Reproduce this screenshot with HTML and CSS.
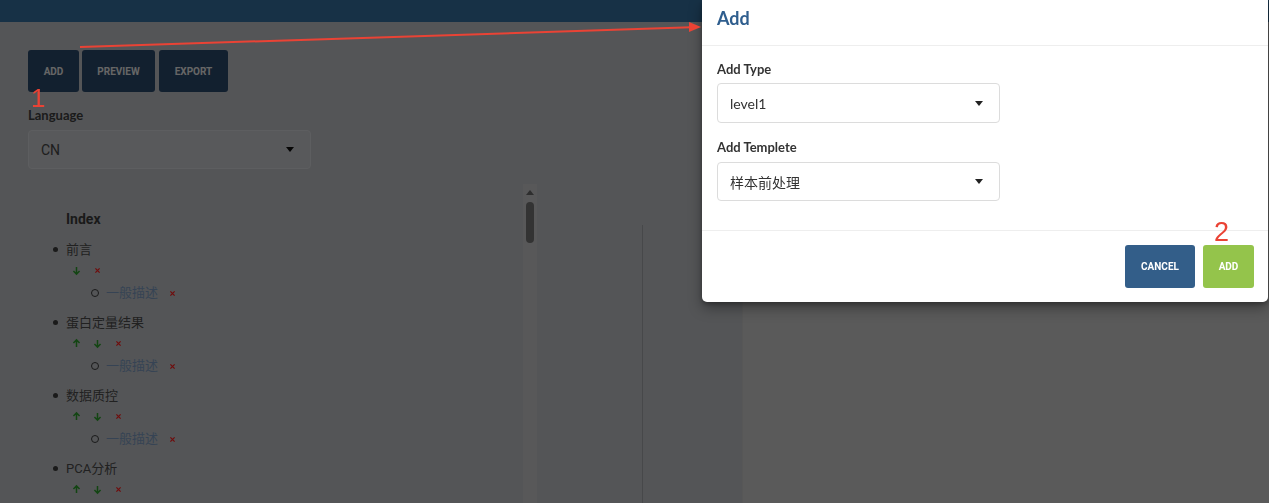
FILE: index.html
```html
<!DOCTYPE html>
<html lang="zh">
<head>
<meta charset="utf-8">
<title>Report Editor</title>
<link rel="stylesheet" href="styles.css">
</head>
<body>
<div class="page">
  <header class="topbar"></header>
  <main class="main">
    <section class="left">
      <div class="toolbar">
        <button class="tbtn">ADD</button>
        <button class="tbtn">PREVIEW</button>
        <button class="tbtn">EXPORT</button>
      </div>
      <label class="field-label">Language</label>
      <div class="select lang-select"><span>CN</span><span class="caret"></span></div>
      <div class="index-panel">
        <div class="index-content">
          <h4 class="index-title">Index</h4>
          <ul class="toc">
            <li>
              <div class="item">前言</div>
              <div class="ctrls"><span class="ic down"><svg viewBox="0 0 10 10"><path d="M5 1v8M1.6 5.6L5 9l3.4-3.4"/></svg></span><span class="ic del"><svg viewBox="0 0 10 10"><path d="M2 2l6 6M8 2L2 8"/></svg></span></div>
              <ul class="sub"><li><a class="link">一般描述</a><span class="ic del sm"><svg viewBox="0 0 10 10"><path d="M2 2l6 6M8 2L2 8"/></svg></span></li></ul>
            </li>
            <li>
              <div class="item">蛋白定量结果</div>
              <div class="ctrls"><span class="ic up"><svg viewBox="0 0 10 10"><path d="M5 9V1M1.6 4.4L5 1l3.4 3.4"/></svg></span><span class="ic down"><svg viewBox="0 0 10 10"><path d="M5 1v8M1.6 5.6L5 9l3.4-3.4"/></svg></span><span class="ic del"><svg viewBox="0 0 10 10"><path d="M2 2l6 6M8 2L2 8"/></svg></span></div>
              <ul class="sub"><li><a class="link">一般描述</a><span class="ic del sm"><svg viewBox="0 0 10 10"><path d="M2 2l6 6M8 2L2 8"/></svg></span></li></ul>
            </li>
            <li>
              <div class="item">数据质控</div>
              <div class="ctrls"><span class="ic up"><svg viewBox="0 0 10 10"><path d="M5 9V1M1.6 4.4L5 1l3.4 3.4"/></svg></span><span class="ic down"><svg viewBox="0 0 10 10"><path d="M5 1v8M1.6 5.6L5 9l3.4-3.4"/></svg></span><span class="ic del"><svg viewBox="0 0 10 10"><path d="M2 2l6 6M8 2L2 8"/></svg></span></div>
              <ul class="sub"><li><a class="link">一般描述</a><span class="ic del sm"><svg viewBox="0 0 10 10"><path d="M2 2l6 6M8 2L2 8"/></svg></span></li></ul>
            </li>
            <li>
              <div class="item">PCA分析</div>
              <div class="ctrls"><span class="ic up"><svg viewBox="0 0 10 10"><path d="M5 9V1M1.6 4.4L5 1l3.4 3.4"/></svg></span><span class="ic down"><svg viewBox="0 0 10 10"><path d="M5 1v8M1.6 5.6L5 9l3.4-3.4"/></svg></span><span class="ic del"><svg viewBox="0 0 10 10"><path d="M2 2l6 6M8 2L2 8"/></svg></span></div>
            </li>
          </ul>
        </div>
        <div class="scrollbar">
          <span class="sb-arrow"></span>
          <span class="sb-thumb"></span>
        </div>
      </div>
    </section>
    <section class="mid"></section>
    <section class="right"></section>
  </main>
</div>

<div class="overlay"></div>

<div class="modal">
  <div class="modal-head"><h3 class="modal-title">Add</h3></div>
  <div class="modal-body">
    <label class="m-label">Add Type</label>
    <div class="select m-select"><span>level1</span><span class="caret"></span></div>
    <label class="m-label second">Add Templete</label>
    <div class="select m-select second"><span>样本前处理</span><span class="caret"></span></div>
  </div>
  <div class="modal-foot">
    <button class="mbtn cancel">CANCEL</button>
    <button class="mbtn add">ADD</button>
  </div>
</div>

<svg class="annot" viewBox="0 0 1269 503" width="1269" height="503">
  <line x1="80" y1="47" x2="691" y2="27.3" stroke="#ea4335" stroke-width="2"/>
  <polygon points="689,22 701,27 689,32" fill="#ea4335"/>
</svg>
<span class="mark mark1">1</span>
<span class="mark mark2">2</span>
</body>
</html>
```

FILE: styles.css
```css
* { box-sizing: border-box; }

html, body {
  margin: 0;
  padding: 0;
  width: 1269px;
  height: 503px;
  overflow: hidden;
}

body {
  font-family: Roboto, "Noto Sans CJK SC", sans-serif;
  background: #bbbdc1;
  color: #4a4a4a;
}

.page {
  display: flex;
  flex-direction: column;
  height: 503px;
}

.topbar {
  height: 22px;
  flex: 0 0 22px;
  background: #336d9c;
}

.main {
  flex: 1;
  display: flex;
  min-height: 0;
}

.left {
  margin-left: 28px;
  width: 509px;
  padding-top: 28px;
  display: flex;
  flex-direction: column;
  min-height: 0;
}

.toolbar {
  display: flex;
  gap: 3px;
}

.tbtn {
  height: 42px;
  border: none;
  border-radius: 3px;
  background: #284768;
  color: #e3e3e3;
  font-family: Roboto, sans-serif;
  font-weight: 700;
  font-size: 10px;
  padding: 0;
}
.tbtn:nth-child(1) { width: 51px; }
.tbtn:nth-child(2) { width: 73px; }
.tbtn:nth-child(3) { width: 69px; margin-left: 1px; }

.field-label {
  display: block;
  margin-top: 15px;
  font-family: Lato, Roboto, sans-serif;
  font-weight: 700;
  font-size: 13px;
  line-height: 16px;
  color: #3c3c3c;
}

.select {
  display: flex;
  align-items: center;
  justify-content: space-between;
  border-radius: 4px;
  padding: 0 16px 0 12px;
  font-size: 14px;
}

.caret {
  width: 0;
  height: 0;
  border-left: 4.5px solid transparent;
  border-right: 4.5px solid transparent;
  border-top: 5px solid #222;
}

.lang-select {
  margin-top: 7px;
  width: 283px;
  height: 39px;
  background: #c3c5c9;
  border: 1px solid #cfd1d5;
  color: #444;
  font-family: Roboto, sans-serif;
}
.lang-select .caret { border-top-color: #0e0e0e; }

.index-panel {
  margin-top: 15px;
  flex: 1;
  display: flex;
  min-height: 0;
}

.index-content {
  flex: 1;
  padding-top: 25px;
}

.index-title {
  margin: 0 0 11px 38px;
  font-size: 14px;
  line-height: 20px;
  font-weight: 700;
  color: #3a3a3a;
}

.toc {
  list-style: none;
  margin: 0;
  padding: 0 0 0 25px;
  font-size: 13px;
}

.toc > li { margin-bottom: 10px; }

.item {
  line-height: 20px;
  color: #4a4a4a;
}
.item::before {
  content: "";
  display: inline-block;
  width: 5px;
  height: 5px;
  border-radius: 50%;
  background: #3a3a3a;
  margin-right: 8px;
  vertical-align: middle;
  position: relative;
  top: -1px;
}

.ctrls {
  display: flex;
  align-items: center;
  height: 20px;
  padding-left: 19px;
  gap: 13px;
}

.ic {
  display: inline-flex;
  width: 8px;
  height: 10px;
  align-items: center;
  justify-content: center;
}
.ic svg {
  width: 9px;
  height: 9px;
  fill: none;
  stroke-width: 1.7;
  overflow: visible;
}
.up svg, .down svg { stroke: #2c9a2c; }
.del svg { stroke: #f51d1d; width: 7px; height: 7px; stroke-width: 1.8; }

.sub {
  list-style: none;
  margin: 3px 0 0;
  padding: 0 0 0 38px;
}
.sub li {
  display: flex;
  align-items: center;
  line-height: 20px;
}
.sub li::before {
  content: "";
  display: inline-block;
  width: 6px;
  height: 6px;
  border: 1px solid #3a3a3a;
  border-radius: 50%;
  margin-right: 7px;
}

.link {
  color: #7896ba;
  font-size: 13px;
}
.del.sm { margin-left: 10px; }

.scrollbar {
  width: 14px;
  background: #c3c3c6;
  display: flex;
  flex-direction: column;
  align-items: center;
  padding-top: 6px;
}
.sb-arrow {
  width: 0;
  height: 0;
  border-left: 4px solid transparent;
  border-right: 4px solid transparent;
  border-bottom: 5px solid #666;
}
.sb-thumb {
  margin-top: 7px;
  width: 8px;
  height: 41px;
  border-radius: 4px;
  background: #717171;
}

.mid {
  margin-left: 105px;
  width: 100px;
  margin-top: 203px;
  border-left: 1px solid #9ea0a4;
}

.right {
  flex: 1;
  background: #c8c8c8;
  border-left: 1px solid #c0c0c0;
}

.overlay {
  position: fixed;
  inset: 0;
  background: rgba(0, 0, 0, 0.55);
  z-index: 5;
}

.modal {
  position: absolute;
  top: 0;
  left: 702px;
  width: 566px;
  background: #fff;
  border-radius: 0 0 5px 5px;
  box-shadow: 0 6px 14px rgba(0, 0, 0, 0.35), 0 2px 4px rgba(0, 0, 0, 0.25);
  z-index: 10;
  font-family: Lato, Roboto, "Noto Sans CJK SC", sans-serif;
}

.modal-head {
  height: 46px;
  padding: 7px 15px 0;
  border-bottom: 1px solid #eeeeee;
}

.modal-title {
  margin: 0;
  font-size: 18px;
  line-height: 22px;
  font-weight: 700;
  color: #2f5e8e;
}

.modal-body {
  padding: 15px 15px 29px;
  border-bottom: 1px solid #eeeeee;
}

.m-label {
  display: block;
  font-weight: 700;
  font-size: 13px;
  line-height: 16px;
  color: #333;
}
.m-label.second { margin-top: 16px; }

.m-select {
  margin-top: 6px;
  width: 283px;
  height: 40px;
  border: 1px solid #dcdcdc;
  color: #333;
  font-family: Lato, "Noto Sans CJK SC", sans-serif;
}
.m-select.second { margin-top: 7px; height: 39px; }

.modal-foot {
  display: flex;
  justify-content: flex-end;
  gap: 8px;
  padding: 14px 14px 14px;
}

.mbtn {
  height: 43px;
  border: none;
  border-radius: 3px;
  color: #fff;
  font-family: Roboto, sans-serif;
  font-weight: 700;
  font-size: 10px;
  padding: 0;
}
.mbtn.cancel { width: 70px; background: #335e89; }
.mbtn.add { width: 51px; background: #94c44b; }

.annot {
  position: absolute;
  top: 0;
  left: 0;
  z-index: 20;
  pointer-events: none;
}

.mark {
  position: absolute;
  z-index: 21;
  color: #ea4335;
  font-family: "Liberation Sans", sans-serif;
  font-weight: 400;
  line-height: 1;
}
.mark1 { left: 31px; top: 85px; font-size: 26px; }
.mark2 { left: 1214px; top: 219px; font-size: 27px; }
```
